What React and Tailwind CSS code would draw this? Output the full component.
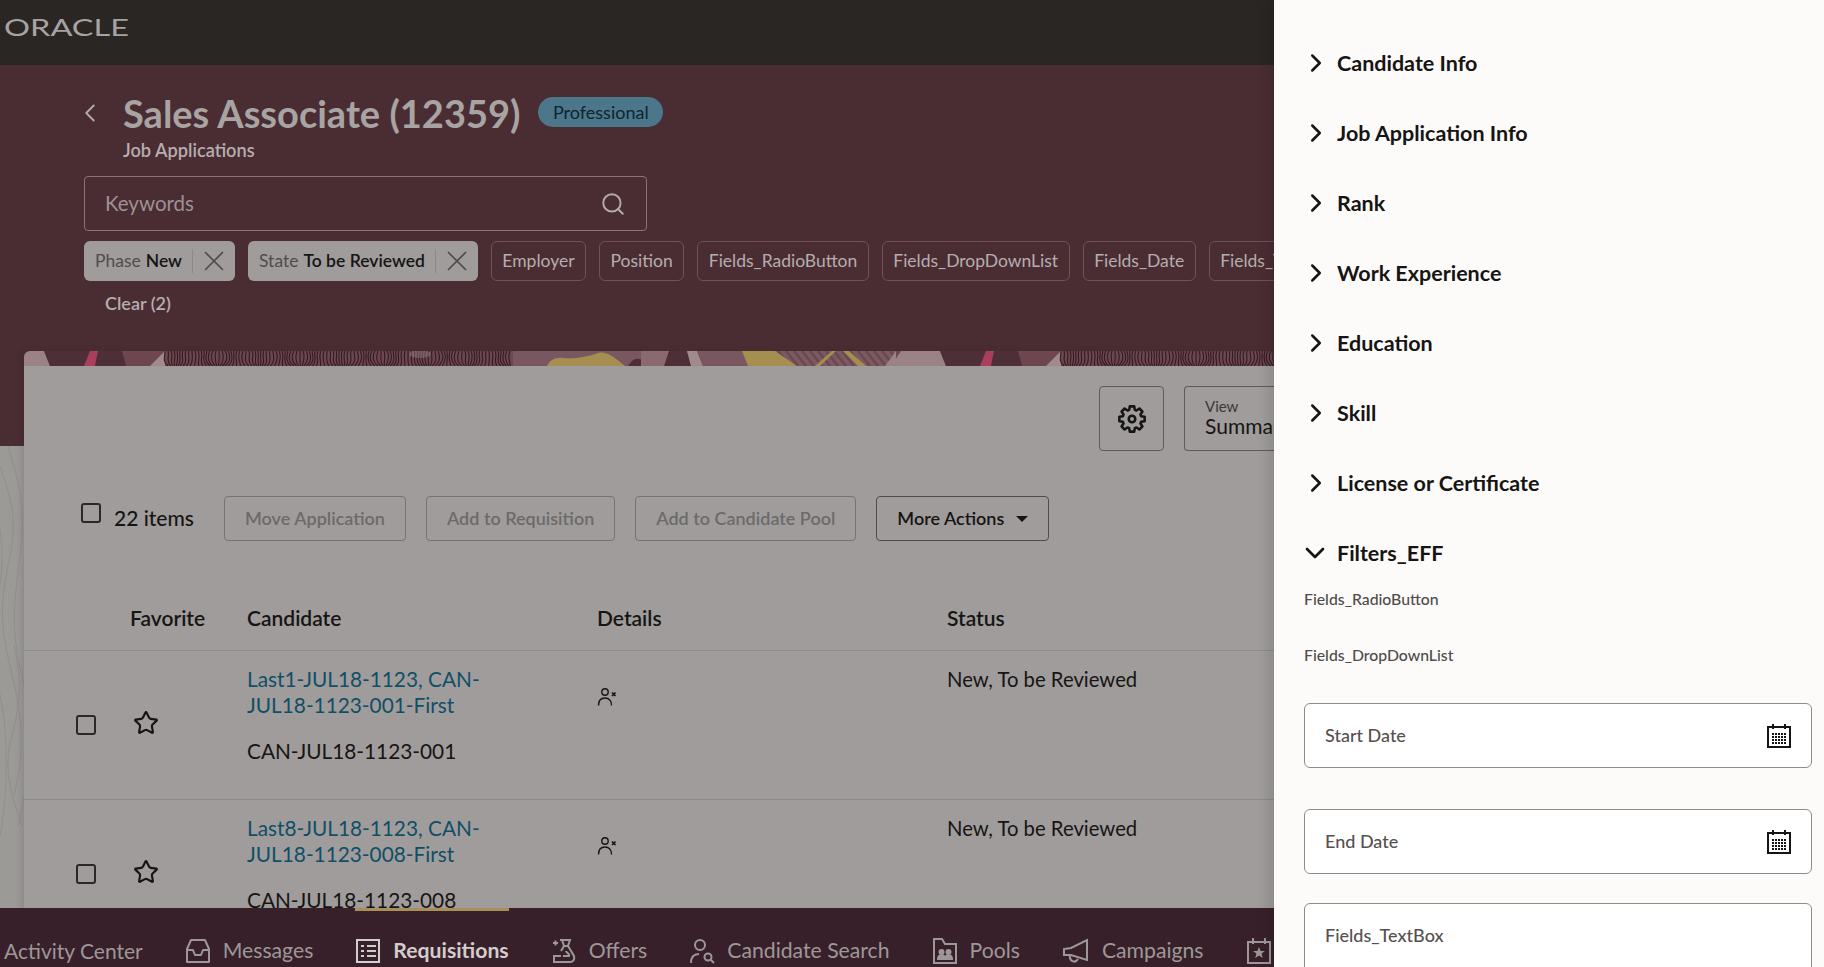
import React from 'react';
import { ChevronLeft, ChevronRight, ChevronDown, Search, X, Star } from 'lucide-react';

const font = { fontFamily: 'Lato, "Noto Sans", sans-serif' };

const navItems = [
  { label: 'Messages', Icon: InboxIcon },
  { label: 'Requisitions', Icon: ReqIcon, active: true },
  { label: 'Offers', Icon: OfferIcon },
  { label: 'Candidate Search', Icon: PersonSearchIcon },
  { label: 'Pools', Icon: PoolIcon },
  { label: 'Campaigns', Icon: CampaignIcon },
];

const sections = ['Candidate Info', 'Job Application Info', 'Rank', 'Work Experience', 'Education', 'Skill', 'License or Certificate'];
const chips = ['Employer', 'Position', 'Fields_RadioButton', 'Fields_DropDownList', 'Fields_Date', 'Fields_TextBox'];

const rows = [
  { line1: 'Last1-JUL18-1123, CAN-', line2: 'JUL18-1123-001-First', id: 'CAN-JUL18-1123-001' },
  { line1: 'Last8-JUL18-1123, CAN-', line2: 'JUL18-1123-008-First', id: 'CAN-JUL18-1123-008' },
];

function InboxIcon(props) {
  return (
    <svg viewBox="0 0 26 26" fill="none" stroke="currentColor" strokeWidth="2" strokeLinejoin="round" {...props}>
      <path d="M2 11 6 2h14l4 9v13H2z" />
      <path d="M2 12h6l2 5h6l2-5h6" />
    </svg>
  );
}

function ReqIcon(props) {
  return (
    <svg viewBox="0 0 26 26" fill="none" stroke="currentColor" strokeWidth="2" {...props}>
      <rect x="2" y="2" width="22" height="22" />
      <path d="M6 8h3M12 8h9M6 13h3M12 13h9M6 18h3M12 18h9" />
    </svg>
  );
}

function OfferIcon(props) {
  return (
    <svg viewBox="0 0 26 26" fill="none" stroke="currentColor" strokeWidth="2" {...props}>
      <path d="M9 2h10l-2 6 6 10c1 4-1 6-4 6H3v-6h7M11 2l2 6h4M13 8l-3 5" />
      <path d="M12 18h6c1-3-3-3-3-5M2 5h5M4.500 2.500v5" />
    </svg>
  );
}

function PersonSearchIcon(props) {
  return (
    <svg viewBox="0 0 26 26" fill="none" stroke="currentColor" strokeWidth="2" {...props}>
      <circle cx="11" cy="7" r="5" />
      <path d="M2 25c0-6 3-9 8-9" />
      <circle cx="19" cy="19" r="3.500" />
      <path d="M21.500 21.500 25 25" />
    </svg>
  );
}

function PoolIcon(props) {
  return (
    <svg viewBox="0 0 26 26" fill="none" stroke="currentColor" strokeWidth="2" {...props}>
      <path d="M2 25V1h8l3 5h11v19z" />
      <circle cx="9.500" cy="14" r="2" fill="currentColor" />
      <circle cx="16.500" cy="14" r="2" fill="currentColor" />
      <path d="M6 21c0-5 7-5 7 0 0-5 7-5 7 0z" fill="currentColor" />
    </svg>
  );
}

function CampaignIcon(props) {
  return (
    <svg viewBox="0 0 28 26" fill="none" stroke="currentColor" strokeWidth="2" {...props} className="w-[28px] h-[26px] shrink-0">
      <path d="M25 2v20L9 17H2v-6l7-1z" />
      <path d="M8 17c-1 6 5 9 8 4" />
    </svg>
  );
}

function EventIcon(props) {
  return (
    <svg viewBox="0 0 26 26" fill="none" stroke="currentColor" strokeWidth="2" {...props}>
      <rect x="2" y="4" width="22" height="21" />
      <path d="M7 0v6M19 0v6" />
      <path d="m13 9 1.600 4H19l-3.500 2.600 1.300 4.400-3.800-2.600L9.200 20l1.300-4.400L7 13h4.400z" fill="currentColor" stroke="none" />
    </svg>
  );
}

function PersonX(props) {
  return (
    <svg viewBox="0 0 20 20" fill="none" stroke="currentColor" {...props}>
      <circle cx="8" cy="5" r="3.200" strokeWidth="1.400" />
      <path d="M1.500 18.500c0-5 2.500-7.500 6.500-7.500s6.500 2.500 6.500 7.500" strokeWidth="1.400" />
      <path d="m15 5.500 3.500 3.500M18.500 5.500 15 9" strokeWidth="1.700" />
    </svg>
  );
}

// 8 toothed gear, computed so the teeth stay even
function GearIcon(props) {
  let d = '';
  for (let i = 0; i < 8; i++) {
    const a = (i * Math.PI) / 4;
    const pts = [[-0.3, 8.2], [-0.17, 11], [0.17, 11], [0.3, 8.2]];
    pts.forEach(([da, r]) => {
      const x = 12 + r * Math.sin(a + da);
      const y = 12 - r * Math.cos(a + da);
      d += `${d ? 'L' : 'M'}${x.toFixed(2)} ${y.toFixed(2)}`;
    });
  }
  return (
    <svg viewBox="0 0 24 24" fill="none" stroke="currentColor" strokeWidth="2.200" strokeLinejoin="round" {...props}>
      <path d={d + 'Z'} />
      <circle cx="12" cy="12" r="2.800" />
    </svg>
  );
}

function CalendarIcon() {
  return (
    <svg viewBox="0 0 24 24" className="w-6 h-6 text-[#161513]" fill="none">
      <rect x="1" y="3" width="22" height="20" stroke="currentColor" strokeWidth="2" />
      <path d="M6 0v5M18 0v5" stroke="currentColor" strokeWidth="2" />
      <path d="M5 10h14M5 13h14M5 16h14M5 19h14" stroke="currentColor" strokeWidth="2" strokeDasharray="2 1" />
    </svg>
  );
}

// decorative banner behind the card, the tile repeats every 896px
function BannerTile() {
  const lines = [];
  for (let i = 0; i < 116; i++) {
    const x = 165 + i * 3;
    const w = 3 * Math.sin(i * 0.7);
    const w2 = 3 * Math.cos(i * 0.45);
    lines.push(<path key={i} d={`M${x} 0C${x + w} 5 ${x - w2} 10 ${x + w2} 15`} stroke="#2f1c22" strokeWidth="1.100" fill="none" />);
  }
  const stripes = [];
  for (let i = 0; i < 16; i++) {
    stripes.push(<path key={i} d={`M${770 + i * 8} 0l12 15`} stroke="#6a4852" strokeWidth="2.500" />);
  }
  return (
    <g>
      <rect width="896" height="15" fill="#6e4650" />
      <polygon points="5,0 44,0 50,15 -5,15" fill="#9a8286" />
      <polygon points="44,0 92,0 84,15 50,15" fill="#4f2f37" />
      <polygon points="90,0 98,0 95,15 84,15" fill="#a8405c" />
      <polygon points="98,0 122,0 126,15 95,15" fill="#4f2f37" />
      <polygon points="165,0 150,15 165,15" fill="#a08a8c" />
      {lines}
      <ellipse cx="420" cy="3" rx="11" ry="4" fill="#a08a8c" opacity="0.4" />
      <rect x="513" width="128" height="15" fill="#7a5660" />
      <path d="M547 15c3-6 8-9 16-8 10 1 25-1 35-5 8-2 15 3 27 13z" fill="#a68d50" />
      <path d="M628 15c4-6 8-9 14-6l6 6z" fill="#4f2f37" />
      <rect x="641" width="28" height="15" fill="#8a6a70" />
      <polygon points="669,0 687,0 691,15 664,15" fill="#4f2f37" />
      <polygon points="687,0 697,0 703,15 691,15" fill="#a08a8c" />
      <polygon points="697,0 745,0 750,15 703,15" fill="#7a5660" />
      <rect x="775" width="121" height="15" fill="#7d5a62" />
      {stripes}
      <polygon points="742,0 775,0 797,15 748,15" fill="#a68d50" />
      <polygon points="832,0 836,0 820,15 815,15" fill="#a68d50" />
      <polygon points="843,0 849,0 866,15 858,15" fill="#a68d50" />
      <polygon points="885,15 896,0 896,15" fill="#9a8286" />
    </g>
  );
}

function Banner() {
  return (
    <svg width="1250" height="15" viewBox="0 0 1250 15" className="block">
      <g transform="translate(-24 0)"><BannerTile /></g>
      <g transform="translate(872 0)"><BannerTile /></g>
    </svg>
  );
}

function TopoStrip() {
  return (
    <svg width="24" height="462" viewBox="0 0 24 462" className="block" fill="none" stroke="#908f8c" strokeWidth="1">
      <path d="M0 20c10 30 18 50 10 90s-12 60 0 110 16 80 4 130" />
      <path d="M8 0c12 40 18 60 12 110s-10 70 2 120 6 110-4 150" />
      <path d="M-6 60c10 30 10 60 4 90s-2 80 4 110 6 90-2 130" />
      <path d="M14 200c8 30 6 60-2 90s-4 50 10 90" />
    </svg>
  );
}

function Chip({ children }) {
  return (
    <div className="shrink-0 h-10 px-[10.500px] flex items-center rounded-md border border-[#6e5258] text-[#b6adae] text-[17.500px] whitespace-nowrap">
      {children}
    </div>
  );
}

function ActiveChip({ label, value }) {
  return (
    <div className="shrink-0 h-10 pl-[11px] pr-[4px] flex items-center rounded-md bg-[#a09c9c] text-[17.500px] whitespace-nowrap">
      <span className="text-[#4e4c4b]">{label}</span>
      <span className="ml-[5px] font-semibold text-[#161513]">{value}</span>
      <span className="ml-[10px] w-px h-6 bg-[#8d8989]" />
      <X className="ml-[4px] w-[34px] h-[34px] text-[#4e4c4b]" strokeWidth={1.2} />
    </div>
  );
}

function ToolButton({ children, className }) {
  return (
    <button className={`h-[45px] px-5 rounded-[4px] border text-[18px] font-semibold whitespace-nowrap ${className}`}>
      {children}
    </button>
  );
}

export default function App() {
  return (
    <div className="flex h-[967px] w-[1824px] overflow-hidden bg-[#fcfbfa]" style={font}>
      <div className="w-[1274px] shrink-0 h-full flex flex-col overflow-hidden">
        <header className="h-[65px] shrink-0 bg-[#2a2624] pl-[4px] pt-[16px]">
          <svg width="128" height="26" viewBox="0 0 128 26" className="overflow-visible">
            <text x="0" y="20" fontSize="23" fill="#a6a3a1" textLength="125" lengthAdjust="spacingAndGlyphs" style={{ fontFamily: 'Lato, sans-serif' }}>ORACLE</text>
          </svg>
        </header>

        <div className="flex-1 min-h-0 overflow-hidden bg-[#9b9a97] relative">
          <div className="absolute left-0 top-[381px]"><TopoStrip /></div>

          <section className="relative h-[381px] bg-[#4a2d33] pl-[84px] pt-[33px] overflow-hidden">
            <div className="flex items-start">
              <ChevronLeft className="w-[30px] h-[30px] -ml-[9px] text-[#b1abab]" strokeWidth={1.5} />
              <div className="ml-[18px]">
                <div className="flex items-center">
                  <h1 className="text-[38px] leading-[30px] font-bold text-[#a8a4a4]">Sales Associate (12359)</h1>
                  <span className="ml-[18px] -mt-[2px] h-[30px] px-[14.500px] rounded-full bg-[#4c7689] text-[#0f2430] text-[18px] flex items-center">Professional</span>
                </div>
                <div className="mt-[10px] text-[18.200px] leading-[24px] font-semibold text-[#b6adae]">Job Applications</div>
              </div>
            </div>

            <div className="mt-[14px] w-[563px] h-[55px] border border-[#8a7378] rounded-[4px] flex items-center justify-between pl-5 pr-[20px]">
              <span className="text-[20.500px] text-[#9e9193]">Keywords</span>
              <Search className="w-[26px] h-[26px] text-[#b1abab]" strokeWidth={1.8} />
            </div>

            <div className="mt-[10px] flex gap-[13px] w-[1190px] overflow-hidden">
              <ActiveChip label="Phase" value="New" />
              <ActiveChip label="State" value="To be Reviewed" />
              {chips.map((c) => <Chip key={c}>{c}</Chip>)}
            </div>
            <div className="mt-[10px] ml-[21px] text-[18px] leading-[24px] font-semibold text-[#b6adae]">Clear (2)</div>
          </section>

          <div className="relative -mt-[95px] ml-[24px] w-[1250px] shadow-[-3px_0_6px_rgba(0,0,0,0.1)] rounded-t-md">
            <div className="h-[15px] overflow-hidden rounded-t-md"><Banner /></div>
            <div className="bg-[#a09c9c] h-[685px]">
              <div className="flex justify-end gap-5 pt-[20px] h-[130px]">
                <button className="w-[65px] h-[65px] rounded-[4px] border border-[#5f5b5b] flex items-center justify-center">
                  <GearIcon className="w-[28px] h-[28px] text-[#161513]" />
                </button>
                <div className="w-[90px] h-[65px] rounded-l-[4px] border border-r-0 border-[#5f5b5b] pl-5 pt-[11px] overflow-hidden whitespace-nowrap">
                  <div className="text-[15px] leading-[16px] text-[#3a3837]">View</div>
                  <div className="text-[21px] leading-[24px] text-[#161513]">Summary</div>
                </div>
              </div>

              <div className="flex items-center h-[45px] pl-[57px]">
                <div className="w-5 h-[20px] -mt-[11px] rounded-[3px] border-2 border-[#2b2928]" />
                <span className="ml-[13px] -mt-[2px] text-[21px] font-medium text-[#161513] w-[110px]">22 items</span>
                <div className="flex gap-5">
                  <ToolButton className="border-[#767373] text-[#6d6a6a]">Move Application</ToolButton>
                  <ToolButton className="border-[#767373] text-[#6d6a6a]">Add to Requisition</ToolButton>
                  <ToolButton className="border-[#767373] text-[#6d6a6a]">Add to Candidate Pool</ToolButton>
                  <ToolButton className="border-[#4f4c4c] text-[#161513] flex items-center">
                    More Actions
                    <span className="ml-3 w-0 h-0 border-x-[6px] border-x-transparent border-t-[6px] border-t-[#161513]" />
                  </ToolButton>
                </div>
              </div>

              <div className="mt-[50px] flex h-[60px] text-[21px] font-semibold text-[#161513] pl-[106px] pb-[6px] items-center border-b border-[#8e8b8b]">
                <span className="w-[117px]">Favorite</span>
                <span className="w-[350px]">Candidate</span>
                <span className="w-[350px]">Details</span>
                <span>Status</span>
              </div>

              {rows.map((r) => (
                <div key={r.id} className="h-[149px] flex border-b border-[#8e8b8b] text-[20.800px] pl-[52px]">
                  <div className="w-5 h-[20px] mt-[64px] rounded-[3px] border-2 border-[#2b2928]" />
                  <Star className="ml-[37px] mt-[59px] w-[26px] h-[26px] text-[#161513]" strokeWidth={2} />
                  <div className="ml-[88px] w-[350px] pt-[15px] leading-[26px]">
                    <div className="text-[#0f4f66]">{r.line1}</div>
                    <div className="text-[#0f4f66]">{r.line2}</div>
                    <div className="mt-[20px] text-[#161513]">{r.id}</div>
                  </div>
                  <PersonX className="w-5 h-5 mt-[36px] text-[#161513]" />
                  <div className="ml-[330px] pt-[15px] text-[20.300px] leading-[26px] text-[#161513]">New, To be Reviewed</div>
                </div>
              ))}
            </div>
          </div>
        </div>

        <nav className="h-[59px] shrink-0 bg-[#38202a] flex items-end pb-[3px] pl-[4px] text-[21.200px] text-[#9d9897] whitespace-nowrap overflow-hidden relative z-10">
          <div className="h-[26px] flex items-center mr-[42px] text-[21px]">Activity Center</div>
          {navItems.map(({ label, Icon, active }) => (
            <div key={label} className={`relative mr-[42px] h-[26px] flex items-center gap-3 ${active ? 'font-bold text-[#d2cecd]' : ''}`}>
              <Icon className="w-[26px] h-[26px] shrink-0" />
              <span>{label}</span>
              {active && <span className="absolute left-0 right-0 -top-[30px] h-[3px] bg-[#a98f5c]" />}
            </div>
          ))}
          <EventIcon className="w-[26px] h-[26px] shrink-0" />
        </nav>
      </div>

      <aside className="flex-1 h-full overflow-hidden bg-[#fcfbfa] pl-[30px] pr-[12px] text-[#161513] shadow-[-6px_0_12px_rgba(0,0,0,0.12)] z-20">
        <div className="pt-[28px]">
          {sections.map((s) => (
            <div key={s} className="h-[70px] flex items-center">
              <ChevronRight className="w-[30px] h-[30px] -ml-[3px]" strokeWidth={2} />
              <span className="ml-[6px] text-[21.500px] font-bold">{s}</span>
            </div>
          ))}
          <div className="h-[70px] flex items-center">
            <ChevronDown className="w-[32px] h-[32px] -ml-[5px]" strokeWidth={2} />
            <span className="ml-[6px] text-[21.500px] font-bold">Filters_EFF</span>
          </div>
        </div>
        <div className="mt-[1px] text-[15.800px] font-medium text-[#4f4c4b] leading-[20px]">Fields_RadioButton</div>
        <div className="mt-[36px] text-[15.800px] font-medium text-[#4f4c4b] leading-[20px]">Fields_DropDownList</div>
        {['Start Date', 'End Date'].map((f, i) => (
          <div key={f} className={`h-[65px] bg-white rounded-md border border-[#8f8d8c] flex items-center justify-between pl-5 pr-[20px] ${i === 0 ? 'mt-[38px]' : 'mt-[41px]'}`}>
            <span className="text-[18px] text-[#55514f] font-medium">{f}</span>
            <CalendarIcon />
          </div>
        ))}
        <div className="mt-[29px] h-[80px] bg-white rounded-md border border-[#8f8d8c] flex items-center pl-5 pb-[16px]">
          <span className="text-[18px] text-[#55514f] font-medium">Fields_TextBox</span>
        </div>
      </aside>
    </div>
  );
}
